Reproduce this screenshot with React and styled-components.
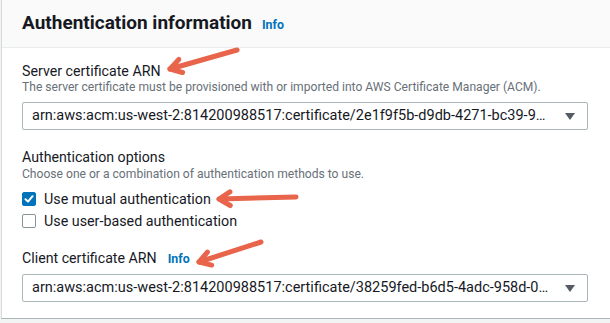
import React from 'react';
import styled, { createGlobalStyle } from 'styled-components';

const GlobalStyle = createGlobalStyle`
  html, body { margin: 0; padding: 0; background: #f2f3f3; }
  body { font-family: Roboto, "Liberation Sans", Arial, sans-serif; color: #16191f; }
  * { box-sizing: border-box; }
`;

const Page = styled.div`
  position: relative;
  width: 610px;
  height: 323px;
  overflow: hidden;
`;

const Panel = styled.section`
  margin-left: 1px;
  width: 660px;
  background: #ffffff;
  border-left: 1px solid #d5dbdb;
  border-bottom: 1px solid #aab7b8;
`;

const Header = styled.header`
  height: 48px;
  display: flex;
  align-items: baseline;
  gap: 10px;
  padding: 12px 20px 0;
  background: #fafafa;
  border-bottom: 1px solid #eaeded;
`;

const Title = styled.h2`
  margin: 0;
  font-size: 19px;
  line-height: 22px;
  font-weight: 700;
  color: #16191f;
`;

const InfoLink = styled.a`
  font-size: 12.4px;
  font-weight: 700;
  color: #0073bb;
  text-decoration: none;
`;

const Body = styled.div`
  display: flex;
  flex-direction: column;
  gap: 18px;
  padding: 14px 20px 16px;
`;

const Field = styled.div`
  display: flex;
  flex-direction: column;
`;

const LabelRow = styled.div`
  display: flex;
  align-items: baseline;
  gap: 11px;
  font-size: 14.2px;
  line-height: 18px;
  color: #16191f;
`;

const Description = styled.div`
  font-size: 12.1px;
  line-height: 14px;
  color: #687078;
  margin-top: ${p => p.$top || 0}px;
`;

const Select = styled.div`
  margin-top: ${p => p.$top}px;
  width: 566px;
  height: 28px;
  display: flex;
  align-items: center;
  justify-content: space-between;
  padding: 0 12px 0 9px;
  border: 1px solid #aab7b8;
  border-radius: 2px;
  background: #fff;
  font-size: 14.5px;
  line-height: 26px;
  color: #16191f;
`;

const SelectValue = styled.span`
  white-space: nowrap;
  overflow: hidden;
`;

const Caret = styled.svg`
  flex: none;
  width: 10px;
  height: 7px;
`;

const Options = styled.div`
  display: flex;
  flex-direction: column;
  gap: 2px;
  margin-top: 8px;
`;

const OptionRow = styled.label`
  display: flex;
  align-items: center;
  gap: 8px;
  height: 20px;
  font-size: 14.3px;
  color: #16191f;
`;

const Box = styled.span`
  flex: none;
  width: 14px;
  height: 14px;
  border-radius: 2px;
  display: flex;
  align-items: center;
  justify-content: center;
  background: ${p => (p.$checked ? '#0073bb' : '#ffffff')};
  border: 1px solid ${p => (p.$checked ? '#0073bb' : '#879596')};
`;

const Arrows = styled.svg`
  position: absolute;
  left: 0;
  top: 0;
  pointer-events: none;
`;

const Checkbox = ({ checked, children }) => (
  <OptionRow>
    <Box $checked={checked}>
      {checked && (
        <svg width="10" height="10" viewBox="0 0 10 10">
          <path d="M1.5 5.2 L4 7.6 L8.6 2.2" fill="none" stroke="#fff" strokeWidth="2" strokeLinecap="round" strokeLinejoin="round" />
        </svg>
      )}
    </Box>
    {children}
  </OptionRow>
);

const Dropdown = ({ value, top }) => (
  <Select $top={top}>
    <SelectValue>{value}</SelectValue>
    <Caret viewBox="0 0 10 7">
      <path d="M0 0 H10 L5 7 Z" fill="#545b64" />
    </Caret>
  </Select>
);

const Arrow = ({ x1, y1, x2, y2 }) => {
  const ang = Math.atan2(y1 - y2, x1 - x2);
  const len = 13;
  const spread = 0.55;
  const ax = x2 + len * Math.cos(ang + spread);
  const ay = y2 + len * Math.sin(ang + spread);
  const bx = x2 + len * Math.cos(ang - spread);
  const by = y2 + len * Math.sin(ang - spread);
  return (
    <g fill="none" stroke="#e8644a" strokeWidth="5" strokeLinecap="round" strokeLinejoin="round">
      <path d={`M${x1} ${y1} L${x2} ${y2}`} />
      <path d={`M${ax} ${ay} L${x2} ${y2} L${bx} ${by}`} />
    </g>
  );
};

export default function App() {
  return (
    <Page>
      <GlobalStyle />
      <Panel>
        <Header>
          <Title>Authentication information</Title>
          <InfoLink href="#">Info</InfoLink>
        </Header>
        <Body>
          <Field>
            <LabelRow>Server certificate ARN</LabelRow>
            <Description>
              The server certificate must be provisioned with or imported into AWS Certificate Manager (ACM).
            </Description>
            <Dropdown top={8} value="arn:aws:acm:us-west-2:814200988517:certificate/2e1f9f5b-d9db-4271-bc39-9…" />
          </Field>
          <Field>
            <LabelRow>Authentication options</LabelRow>
            <Description $top={1}>Choose one or a combination of authentication methods to use.</Description>
            <Options>
              <Checkbox checked>Use mutual authentication</Checkbox>
              <Checkbox>Use user-based authentication</Checkbox>
            </Options>
          </Field>
          <Field>
            <LabelRow>
              Client certificate ARN
              <InfoLink href="#">Info</InfoLink>
            </LabelRow>
            <Dropdown top={6} value="arn:aws:acm:us-west-2:814200988517:certificate/38259fed-b6d5-4adc-958d-0…" />
          </Field>
        </Body>
      </Panel>
      <Arrows width="610" height="323" viewBox="0 0 610 323">
        <Arrow x1={237} y1={50} x2={170} y2={69} />
        <Arrow x1={296} y1={197} x2={219} y2={199} />
        <Arrow x1={261} y1={242} x2={199} y2={262} />
      </Arrows>
    </Page>
  );
}
